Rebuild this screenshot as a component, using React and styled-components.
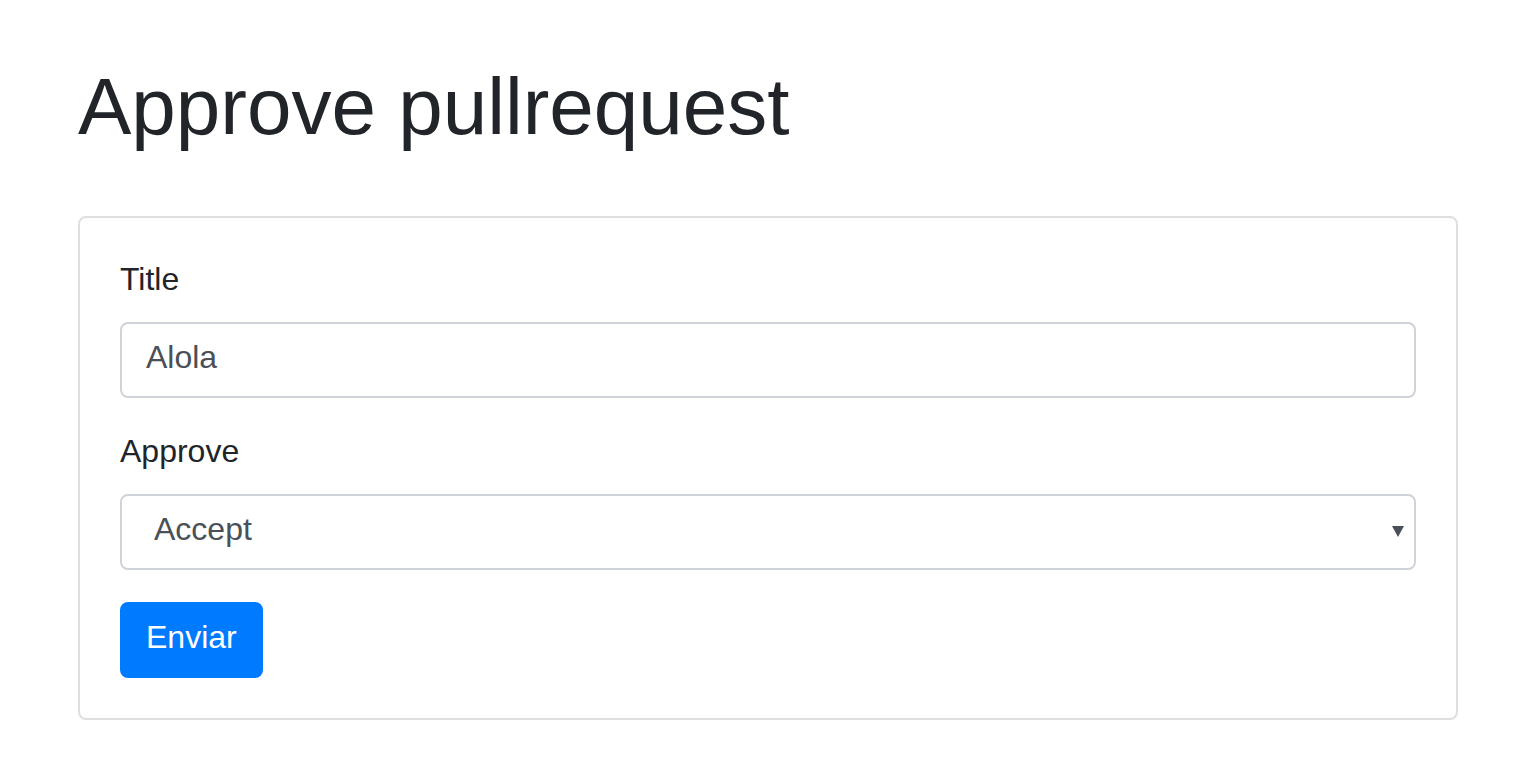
import React from "react";
import styled, { createGlobalStyle } from "styled-components";

const Global = createGlobalStyle`
  html, body { margin: 0; padding: 0; background: #fff; }
  body {
    font-family: "Liberation Sans", Arial, sans-serif;
    color: #212529;
    font-size: 32px;
    line-height: 1.5;
  }
  * { box-sizing: border-box; }
`;

const Container = styled.div`
  max-width: 1440px;
  margin: 0 auto;
  padding: 59px 30px 0;
`;

const Heading = styled.h1`
  margin: 0 0 61px;
  font-size: 80px;
  font-weight: 400;
  line-height: 1.2;
  color: #212529;
`;

const Card = styled.form`
  border: 2px solid rgba(0, 0, 0, 0.125);
  border-radius: 8px;
  padding: 40px;
  display: flex;
  flex-direction: column;
  align-items: flex-start;
`;

const Group = styled.div`
  width: 100%;
  margin-bottom: 32px;
  display: flex;
  flex-direction: column;
`;

const Label = styled.label`
  font-size: 32px;
  line-height: 42px;
  margin-bottom: 22px;
  color: #212529;
`;

const fieldBase = `
  width: 100%;
  height: 76px;
  border: 2px solid #ced4da;
  border-radius: 8px;
  background: #fff;
  color: #495057;
  font-family: "Liberation Sans", Arial, sans-serif;
  font-size: 32px;
  line-height: 48px;
  outline: none;
  margin: 0;
`;

const Input = styled.input`
  ${fieldBase}
  padding: 9px 24px 15px;
`;

const SelectWrap = styled.div`
  position: relative;
  width: 100%;
`;

const Select = styled.select`
  ${fieldBase}
  padding: 0 40px 6px 32px;
  appearance: none;
  -webkit-appearance: none;
`;

const Caret = styled.span`
  position: absolute;
  right: 12px;
  top: 32px;
  width: 0;
  height: 0;
  border-left: 6px solid transparent;
  border-right: 6px solid transparent;
  border-top: 11px solid #495057;
  pointer-events: none;
`;

const Button = styled.button`
  height: 76px;
  padding: 9px 24px 15px;
  border: 2px solid #007bff;
  border-radius: 8px;
  background: #007bff;
  color: #fff;
  font-family: "Liberation Sans", Arial, sans-serif;
  font-size: 32px;
  line-height: 48px;
  cursor: pointer;
`;

export default function App() {
  return (
    <>
      <Global />
      <Container>
        <Heading>Approve pullrequest</Heading>
        <Card onSubmit={(e) => e.preventDefault()}>
          <Group>
            <Label htmlFor="title">Title</Label>
            <Input id="title" defaultValue="Alola" />
          </Group>
          <Group>
            <Label htmlFor="approve">Approve</Label>
            <SelectWrap>
              <Select id="approve" defaultValue="accept">
                <option value="accept">Accept</option>
                <option value="reject">Reject</option>
              </Select>
              <Caret />
            </SelectWrap>
          </Group>
          <Button type="submit">Enviar</Button>
        </Card>
      </Container>
    </>
  );
}
